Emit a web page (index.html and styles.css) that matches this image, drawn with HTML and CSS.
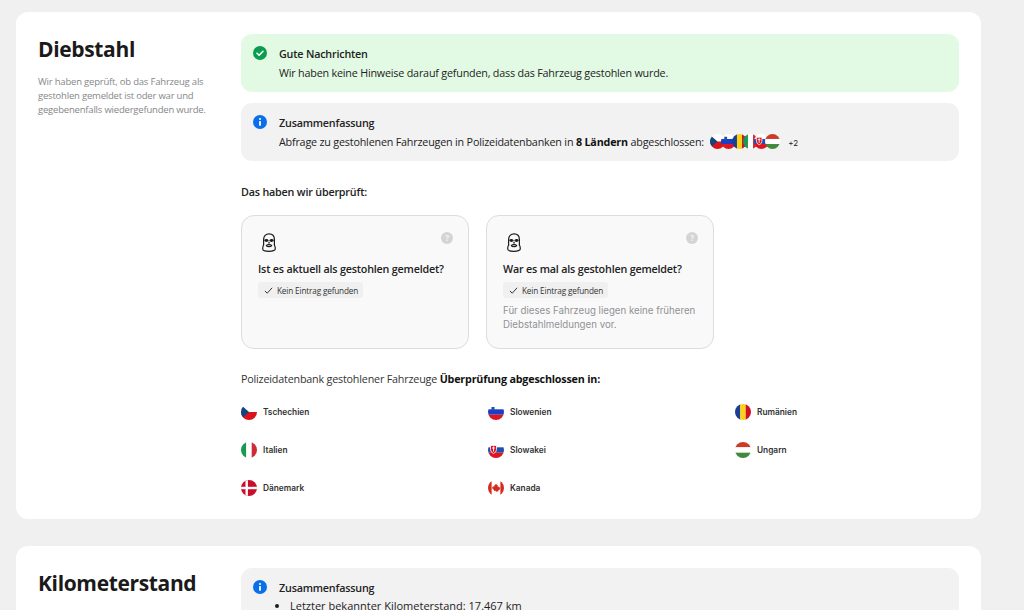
FILE: index.html
```html
<!DOCTYPE html>
<html lang="de">
<head>
  <meta charset="UTF-8" />
  <title>Fahrzeugbericht</title>
  <link rel="stylesheet" href="styles.css">
</head>
<body>

  <svg class="defs" width="0" height="0" aria-hidden="true">
    <defs>
      <clipPath id="round"><circle cx="8" cy="8" r="8" /></clipPath>
      <symbol id="flag-cz" viewBox="0 0 16 16"><g clip-path="url(#round)"><rect width="16" height="8" fill="#fff"/><rect y="8" width="16" height="8" fill="#d7141a"/><path d="M0 1L8 8L0 15Z" fill="#11457e"/></g></symbol>
      <symbol id="flag-si" viewBox="0 0 16 16"><g clip-path="url(#round)"><rect width="16" height="5.3" fill="#fff"/><rect y="5.3" width="16" height="5.4" fill="#1b3fc4"/><rect y="10.7" width="16" height="5.3" fill="#e0141e"/><path d="M3.500 3h3v2.800q0 1.200-1.500 1.800q-1.500-.6-1.500-1.800Z" fill="#1b4fb0"/></g></symbol>
      <symbol id="flag-ro" viewBox="0 0 16 16"><g clip-path="url(#round)"><rect width="5.3" height="16" fill="#1c3f94"/><rect x="5.3" width="5.4" height="16" fill="#fcd116"/><rect x="10.7" width="5.3" height="16" fill="#ce1126"/></g></symbol>
      <symbol id="flag-it" viewBox="0 0 16 16"><g clip-path="url(#round)"><rect width="5.3" height="16" fill="#189a50"/><rect x="5.3" width="5.4" height="16" fill="#fff"/><rect x="10.7" width="5.3" height="16" fill="#ce2b37"/></g></symbol>
      <symbol id="flag-sk" viewBox="0 0 16 16"><g clip-path="url(#round)"><rect width="16" height="5.3" fill="#fff"/><rect y="5.3" width="16" height="5.4" fill="#1b4fb0"/><rect y="10.7" width="16" height="5.3" fill="#e0141e"/><path d="M2.500 3.500h6v4q0 2.800-3 4q-3-1.200-3-4Z" fill="#e0141e" stroke="#fff" stroke-width=".8"/><path d="M5.500 4.500v5M4 6h3" stroke="#fff" stroke-width=".9"/></g></symbol>
      <symbol id="flag-hu" viewBox="0 0 16 16"><g clip-path="url(#round)"><rect width="16" height="5.3" fill="#cd3a26"/><rect y="5.3" width="16" height="5.4" fill="#fff"/><rect y="10.7" width="16" height="5.3" fill="#3f8a3c"/></g></symbol>
      <symbol id="flag-dk" viewBox="0 0 16 16"><g clip-path="url(#round)"><rect width="16" height="16" fill="#c8102e"/><rect x="4.500" width="2.400" height="16" fill="#fff"/><rect y="6.800" width="16" height="2.400" fill="#fff"/></g></symbol>
      <symbol id="flag-ca" viewBox="0 0 16 16"><g clip-path="url(#round)"><rect width="16" height="16" fill="#fff"/><rect width="3.600" height="16" fill="#d52b1e"/><rect x="12.400" width="3.600" height="16" fill="#d52b1e"/><path d="M8 3.600l1 1.700 1-.4-.4 2.200 1.300-.6.3.9 1.200-.1-.6 1.500.5.3-2 1.500.2.8-2-.2V12h-.6v-1.300l-2 .2.2-.8-2-1.500.5-.3-.6-1.500 1.200.1.3-.9 1.300.6L6 4.900l1 .4Z" fill="#d52b1e"/></g></symbol>
      <symbol id="mask" viewBox="0 0 14 19">
        <g fill="none" stroke="#1d1d1d" stroke-width="1.200" stroke-linecap="round" stroke-linejoin="round">
          <path d="M1.600 12V6.500C1.600 3 3.800.8 7 .8s5.400 2.200 5.400 5.700V12"/>
          <path d="M1.600 12C.9 13 .7 14.500.7 16c0 1.300 2.800 2.300 6.300 2.300s6.300-1 6.300-2.300c0-1.500-.2-3-.9-4"/>
          <path d="M2.800 7.200c.9-1 2.800-1 3.300.3-.6 1.100-2.700 1.200-3.300-.3ZM11.200 7.200c-.9-1-2.800-1-3.300.3.600 1.100 2.700 1.200 3.300-.3Z" fill="#1d1d1d"/>
          <path d="M4.300 12.500c.9-1.200 4.500-1.200 5.400 0-.7 1.600-4.700 1.600-5.400 0Z"/>
          <path d="M7 9.200v1"/>
        </g>
      </symbol>
    </defs>
  </svg>

  <!-- DIEBSTAHL -->
  <section class="card">
    <div class="side">
      <h2>Diebstahl</h2>
      <p>Wir haben geprüft, ob das Fahrzeug als gestohlen gemeldet ist oder war und gegebenenfalls wiedergefunden wurde.</p>
    </div>

    <div class="main">
      <div class="notice notice-green">
        <svg class="notice-icon" viewBox="0 0 14 14"><circle cx="7" cy="7" r="7" fill="#0b9d4f"/><path d="M4 7.200l2.100 2.100L10 5.300" fill="none" stroke="#fff" stroke-width="1.600" stroke-linecap="round" stroke-linejoin="round"/></svg>
        <div>
          <h3>Gute Nachrichten</h3>
          <p>Wir haben keine Hinweise darauf gefunden, dass das Fahrzeug gestohlen wurde.</p>
        </div>
      </div>

      <div class="notice notice-grey">
        <svg class="notice-icon" viewBox="0 0 14 14"><circle cx="7" cy="7" r="7" fill="#0a6fe8"/><circle cx="7" cy="3.900" r="1" fill="#fff"/><rect x="6.100" y="5.900" width="1.800" height="4.900" rx=".5" fill="#fff"/></svg>
        <div>
          <h3>Zusammenfassung</h3>
          <p>
            Abfrage zu gestohlenen Fahrzeugen in Polizeidatenbanken in <b>8 Ländern</b> abgeschlossen:
            <span class="flag-stack">
              <svg><use href="#flag-cz"/></svg><svg><use href="#flag-si"/></svg><svg><use href="#flag-ro"/></svg><svg><use href="#flag-it"/></svg><svg><use href="#flag-sk"/></svg><svg><use href="#flag-hu"/></svg>
            </span>
            <span class="more">+2</span>
          </p>
        </div>
      </div>

      <h4 class="checked">Das haben wir überprüft:</h4>

      <div class="checks">
        <div class="check">
          <svg class="mask"><use href="#mask"/></svg>
          <span class="help">?</span>
          <h5>Ist es aktuell als gestohlen gemeldet?</h5>
          <span class="tag"><svg viewBox="0 0 10 10"><path d="M1 5.500l2.600 2.500L9 2" fill="none" stroke="#222" stroke-width="1"/></svg>Kein Eintrag gefunden</span>
        </div>
        <div class="check">
          <svg class="mask"><use href="#mask"/></svg>
          <span class="help">?</span>
          <h5>War es mal als gestohlen gemeldet?</h5>
          <span class="tag"><svg viewBox="0 0 10 10"><path d="M1 5.500l2.600 2.500L9 2" fill="none" stroke="#222" stroke-width="1"/></svg>Kein Eintrag gefunden</span>
          <p>Für dieses Fahrzeug liegen keine früheren Diebstahlmeldungen vor.</p>
        </div>
      </div>

      <p class="db-title">Polizeidatenbank gestohlener Fahrzeuge <b>Überprüfung abgeschlossen in:</b></p>

      <ul class="countries">
        <li><svg><use href="#flag-cz"/></svg>Tschechien</li>
        <li><svg><use href="#flag-si"/></svg>Slowenien</li>
        <li><svg><use href="#flag-ro"/></svg>Rumänien</li>
        <li><svg><use href="#flag-it"/></svg>Italien</li>
        <li><svg><use href="#flag-sk"/></svg>Slowakei</li>
        <li><svg><use href="#flag-hu"/></svg>Ungarn</li>
        <li><svg><use href="#flag-dk"/></svg>Dänemark</li>
        <li><svg><use href="#flag-ca"/></svg>Kanada</li>
      </ul>
    </div>
  </section>

  <!-- KILOMETERSTAND -->
  <section class="card">
    <div class="side">
      <h2>Kilometerstand</h2>
    </div>
    <div class="main">
      <div class="notice notice-grey">
        <svg class="notice-icon" viewBox="0 0 14 14"><circle cx="7" cy="7" r="7" fill="#0a6fe8"/><circle cx="7" cy="3.900" r="1" fill="#fff"/><rect x="6.100" y="5.900" width="1.800" height="4.900" rx=".5" fill="#fff"/></svg>
        <div>
          <h3>Zusammenfassung</h3>
          <ul class="facts">
            <li>Letzter bekannter Kilometerstand: 17.467 km</li>
          </ul>
        </div>
      </div>
    </div>
  </section>

</body>
</html>
```

FILE: styles.css
```css
html, body {
  height: 610px;
  overflow: hidden;
}

body {
  box-sizing: border-box;
  margin: 0;
  padding: 12px 43px 0 16px;
  background-color: #f0f0f0;
  color: #1d1d1d;
  font-family: "Open Sans", "Noto Sans", sans-serif;
  font-size: 10.750px;
  letter-spacing: -0.19px;
}

h2, h3, h4, h5, p, ul {
  margin: 0;
  padding: 0;
}

.defs {
  position: absolute;
}

.card {
  display: flex;
  background-color: #fff;
  border-radius: 12px;
  padding: 22px;
  margin-bottom: 27px;
  height: 463px;
}

.side {
  width: 203px;
  flex-shrink: 0;
}

.side h2 {
  font-size: 21px;
  line-height: 30px;
  font-weight: 700;
  letter-spacing: -0.35px;
  color: #1a1a1a;
}

.side p {
  margin-top: 11px;
  width: 175px;
  font-size: 9.500px;
  line-height: 14px;
  letter-spacing: -0.2px;
  color: #85878a;
}

.main {
  flex: 1;
}

.notice {
  display: flex;
  align-items: flex-start;
  gap: 12px;
  border-radius: 11px;
  padding: 12px;
  height: 34px;
  margin-bottom: 11px;
}

.notice-green {
  background-color: #e2fae3;
}

.notice-grey {
  background-color: #f2f2f3;
}

.notice-icon {
  width: 14px;
  height: 14px;
  flex-shrink: 0;
}

.notice h3 {
  margin-bottom: 1px;
  font-size: 10.750px;
  line-height: 16px;
  font-weight: 600;
  color: #222;
}

.notice p {
  line-height: 20px;
  white-space: nowrap;
  color: #222;
}

.notice b {
  font-weight: 700;
  color: #111;
}

.flag-stack {
  display: inline-flex;
  vertical-align: -3px;
  margin-left: 3px;
}

.flag-stack svg {
  width: 15px;
  height: 15px;
  margin-right: -4px;
}

.more {
  margin-left: 10px;
  font-family: Inter, sans-serif;
  font-size: 8px;
  letter-spacing: 0;
}

.checked {
  margin-top: 23px;
  font-size: 10.750px;
  line-height: 16px;
  font-weight: 600;
  color: #222;
}

.checks {
  display: flex;
  gap: 17px;
  margin-top: 15px;
}

.check {
  position: relative;
  box-sizing: border-box;
  width: 228px;
  height: 134px;
  padding: 17px 16px;
  background-color: #f9f9f9;
  border: 1px solid #dcdcdc;
  border-radius: 13px;
}

.mask {
  display: block;
  width: 14px;
  height: 19px;
  margin: 0 0 0 4px;
}

.help {
  position: absolute;
  top: 16px;
  right: 15px;
  width: 12px;
  height: 12px;
  border-radius: 50%;
  background-color: #d4d4d4;
  color: #f5f5f5;
  font-size: 8px;
  font-weight: 700;
  line-height: 12px;
  text-align: center;
}

.check h5 {
  margin-top: 9px;
  font-size: 10.750px;
  line-height: 16px;
  font-weight: 600;
  color: #222;
  white-space: nowrap;
}

.tag {
  display: inline-flex;
  align-items: center;
  gap: 4px;
  margin-top: 5px;
  padding: 0 5px 0 6px;
  height: 16px;
  background-color: #f0f0f0;
  border-radius: 3px;
  font-size: 8.200px;
  letter-spacing: -0.15px;
  color: #333;
}

.tag svg {
  width: 9px;
  height: 9px;
}

.check p {
  margin-top: 6px;
  font-family: Inter, sans-serif;
  font-size: 9.700px;
  line-height: 14px;
  letter-spacing: 0;
  color: #909296;
}

.db-title {
  margin-top: 22px;
  line-height: 16px;
  color: #333;
}

.db-title b {
  font-weight: 700;
  color: #111;
}

.countries {
  display: grid;
  grid-template-columns: 247px 247px 1fr;
  grid-auto-rows: 38px;
  margin-top: 6px;
  list-style: none;
}

.countries li {
  display: flex;
  align-items: center;
  gap: 6px;
  font-family: Inter, sans-serif;
  font-size: 8.300px;
  font-weight: 600;
  letter-spacing: 0;
  color: #333;
}

.countries svg {
  width: 16px;
  height: 16px;
}

.facts {
  margin-left: 11px;
  font-size: 11px;
  letter-spacing: 0;
  line-height: 18px;
}
```
